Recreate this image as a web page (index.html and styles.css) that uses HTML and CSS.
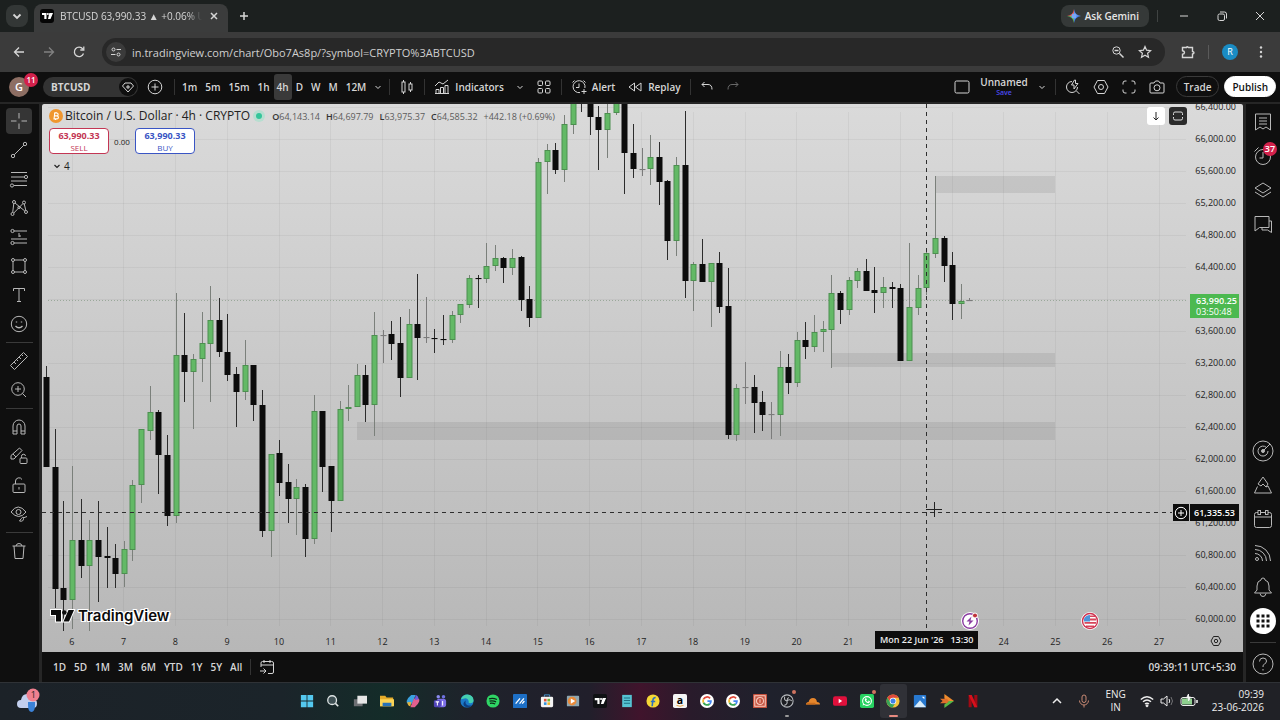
FILE: index.html
```html
<!DOCTYPE html>
<html lang="en">
<head>
    <meta charset="UTF-8">
    <meta name="viewport" content="width=device-width, initial-scale=1.0">
    <title>BTCUSD 63,990.33 ▲ +0.06% Unnamed</title>
    <link rel="stylesheet" href="styles.css">
</head>
<body>

<!-- browser window -->
<div class="tabstrip">
    <button class="tab-search" aria-label="Search tabs"><svg class="ic ic-12" viewBox="0 0 12 12"><path d="M2.5 4.5 6 8l3.5-3.5" stroke-width="1.8"/></svg></button>
    <div class="tab">
        <svg class="favicon" viewBox="0 0 14 14"><rect width="14" height="14" rx="3" fill="#050505"/><path d="M2 4h4.5v6H4.3V6H2zM9.3 4H13l-2.5 6H8z" fill="#fff"/><circle cx="7.9" cy="5" r="1" fill="#fff"/></svg>
        <span class="tab-title">BTCUSD 63,990.33 ▲ +0.06% Unnamed</span>
        <button class="plain" aria-label="Close tab"><svg class="ic ic-12" viewBox="0 0 12 12"><path d="M3 3l6 6M9 3 3 9" stroke-width="1.5"/></svg></button>
    </div>
    <button class="plain new-tab" aria-label="New tab"><svg class="ic ic-12" viewBox="0 0 12 12"><path d="M6 2v8M2 6h8" stroke-width="1.5"/></svg></button>
    <button class="gemini">
        <svg class="ic-14" viewBox="0 0 14 14"><path d="M7 0Q7.800 6.200 14 7L7 7z" fill="#5b8def"/><path d="M7 0Q6.200 6.200 0 7h7z" fill="#e35b55"/><path d="M0 7q6.200.8 7 7V7z" fill="#62b45c"/><path d="M14 7q-6.200.8-7 7V7z" fill="#4285f4"/><circle cx="7" cy="7" r="2.500" fill="#79a6f6"/></svg>
        Ask Gemini
    </button>
    <div class="window-buttons">
        <button class="plain" aria-label="Minimize"><svg class="ic ic-12" viewBox="0 0 12 12"><path d="M2 6h8"/></svg></button>
        <button class="plain" aria-label="Restore"><svg class="ic ic-12" viewBox="0 0 12 12"><rect x="2" y="4" width="6.5" height="6.5" rx="1.5"/><path d="M4 2h4.5q2 0 2 2v4.5"/></svg></button>
        <button class="plain" aria-label="Close"><svg class="ic ic-12" viewBox="0 0 12 12"><path d="M2 2l8 8M10 2l-8 8"/></svg></button>
    </div>
</div>

<div class="navbar">
    <button class="plain" aria-label="Back"><svg class="ic ic-14" viewBox="0 0 14 14"><path d="M12 7H2.500M7 2.500 2.500 7 7 11.500" stroke-width="1.300"/></svg></button>
    <button class="plain faded" aria-label="Forward"><svg class="ic ic-14" viewBox="0 0 14 14"><path d="M2 7h9.500M7 2.500 11.500 7 7 11.500" stroke-width="1.300"/></svg></button>
    <button class="plain" aria-label="Reload"><svg class="ic ic-14" viewBox="0 0 14 14"><path d="M11.500 8.500A4.700 4.700 0 1 1 10.800 4M11.800 1.500v3.500H8.300" stroke-width="1.300"/></svg></button>
    <div class="address">
        <span class="site-info"><svg class="ic ic-12" viewBox="0 0 12 12"><circle cx="3.500" cy="3.500" r="1.500"/><path d="M6.500 3.500H11M1 8.500h4.500"/><circle cx="8.500" cy="8.500" r="1.500"/></svg></span>
        <input class="url" type="text" aria-label="Address" value="in.tradingview.com/chart/Obo7As8p/?symbol=CRYPTO%3ABTCUSD">
        <button class="plain" aria-label="Zoom"><svg class="ic ic-14" viewBox="0 0 14 14"><circle cx="5.500" cy="5.500" r="3.700"/><path d="M8.500 8.500l4 4M3.500 5.500h4" stroke-width="1.500"/></svg></button>
        <button class="plain" aria-label="Bookmark"><svg class="ic ic-14" viewBox="0 0 14 14"><path d="M7 1.500l1.600 3.700 4 .4-3 2.700.9 4L7 10.200l-3.500 2.100.9-4-3-2.700 4-.4z" stroke-width="1.200"/></svg></button>
    </div>
    <button class="plain" aria-label="Extensions"><svg class="ic ic-14" viewBox="0 0 14 14"><path d="M1.500 2.500h4q.5-1.500 2 0h4v4q1.500.5 1.500 1.300T11.500 9v3.500h-10V9.300q2-.3 2-1.800t-2-1.800z" stroke-width="1.400"/></svg></button>
    <span class="nav-line"></span>
    <button class="profile">R</button>
    <button class="plain" aria-label="Menu"><svg class="ic-14" viewBox="0 0 14 14" fill="currentColor"><circle cx="7" cy="2.500" r="1.200"/><circle cx="7" cy="7" r="1.200"/><circle cx="7" cy="11.500" r="1.200"/></svg></button>
</div>

<!-- chart toolbar -->
<div class="toolbar">
    <button class="avatar">G<span class="badge">11</span></button>
    <button class="symbol">BTCUSD
        <span class="symbol-gem"><svg class="ic ic-16" viewBox="0 0 16 16"><path d="M5 4h6l2.500 3L8 13 2.500 7z"/><path d="M8 6v4M6 8h4"/></svg></span>
    </button>
    <button class="plain add-symbol" aria-label="Compare"><svg class="ic ic-16" viewBox="0 0 16 16"><circle cx="8" cy="8" r="6.800"/><path d="M8 4.500v7M4.500 8h7"/></svg></button>
    <span class="line"></span>
    <div class="intervals">
        <button>1m</button><button>5m</button><button>15m</button><button>1h</button><button class="active">4h</button><button>D</button><button>W</button><button>M</button><button>12M</button>
        <button aria-label="More intervals"><svg class="ic ic-8" viewBox="0 0 8 8"><path d="M1.500 3 4 5.500 6.500 3"/></svg></button>
    </div>
    <span class="line"></span>
    <button class="tool" aria-label="Chart type"><svg class="ic ic-16" viewBox="0 0 16 16"><path d="M4.500 1v2M4.500 13v2M11.500 3v2M11.500 11v2"/><rect x="3" y="3" width="3" height="10"/><rect x="10" y="5" width="3" height="6"/></svg></button>
    <span class="line"></span>
    <button class="tool"><svg class="ic ic-16" viewBox="0 0 16 16"><path d="M1 7l4-4 4 2 5-4"/><path d="M2 14.500v-4h3v4zM6.500 14.500v-6h3v6zM11 14.500v-8h3v8zM1 14.500h14"/></svg> Indicators</button>
    <button class="tool" aria-label="Indicator list"><svg class="ic ic-8" viewBox="0 0 8 8"><path d="M1.500 3 4 5.500 6.500 3"/></svg></button>
    <button class="tool" aria-label="Templates"><svg class="ic ic-16" viewBox="0 0 16 16"><rect x="2" y="2" width="4.500" height="4.500" rx="1"/><rect x="9.500" y="2" width="4.500" height="4.500" rx="1"/><rect x="2" y="9.500" width="4.500" height="4.500" rx="1"/><rect x="9.500" y="9.500" width="4.500" height="4.500" rx="1"/></svg></button>
    <span class="line"></span>
    <button class="tool"><svg class="ic ic-16" viewBox="0 0 16 16"><path d="M9 13.600A6 6 0 1 1 13.900 9M8 4.500V8.500H5M1.500 3.500l2-2M14.500 3.500l-2-2M13 10v5M10.500 12.500h5"/></svg> Alert</button>
    <button class="tool"><svg class="ic ic-16" viewBox="0 0 16 16"><path d="M7.500 4v8L2 8zM14 4v8L8.500 8z"/></svg> Replay</button>
    <span class="line"></span>
    <button class="tool" aria-label="Undo"><svg class="ic ic-14" viewBox="0 0 14 14"><path d="M4.500 2 2 4.500 4.500 7M2 4.500h6q4 0 4 5"/></svg></button>
    <button class="tool faded" aria-label="Redo"><svg class="ic ic-14" viewBox="0 0 14 14"><path d="M9.500 2 12 4.500 9.500 7M12 4.500H6q-4 0-4 5"/></svg></button>

    <div class="toolbar-right">
        <button class="tool" aria-label="Layout"><svg class="ic ic-16" viewBox="0 0 16 16"><rect x="1" y="2" width="14" height="12" rx="1.500"/></svg></button>
        <button class="layout-name">Unnamed<span>Save</span></button>
        <button class="tool" aria-label="Layouts"><svg class="ic ic-8" viewBox="0 0 8 8"><path d="M1.500 3 4 5.500 6.500 3"/></svg></button>
        <span class="line"></span>
        <button class="tool" aria-label="Quick search"><svg class="ic ic-16" viewBox="0 0 16 16"><path d="M7 2.500A5.500 5.500 0 1 0 12.500 8M11.500 12l3 3M9.500 1 6.500 6h2.500v4l4-5.500h-2.500V1z"/></svg></button>
        <button class="tool" aria-label="Settings"><svg class="ic ic-16" viewBox="0 0 16 16"><path d="M4.500 1.500h7L15 8l-3.500 6.500h-7L1 8z"/><circle cx="8" cy="8" r="2.500"/></svg></button>
        <button class="tool" aria-label="Fullscreen"><svg class="ic ic-16" viewBox="0 0 16 16"><path d="M2 5.500V4q0-2 2-2h1.500M10.500 2H12q2 0 2 2v1.500M14 10.500V12q0 2-2 2h-1.500M5.500 14H4q-2 0-2-2v-1.500"/></svg></button>
        <button class="tool" aria-label="Snapshot"><svg class="ic ic-16" viewBox="0 0 16 16"><path d="M2 4h3l1.500-2h3L11 4h3q1 0 1 1v8q0 1-1 1H2q-1 0-1-1V5q0-1 1-1z"/><circle cx="8" cy="8.800" r="3"/></svg></button>
        <button class="pill">Trade</button>
        <button class="pill pill-light">Publish</button>
    </div>
</div>

<div class="workspace">
    <div class="drawbar">
        <div class="draw-group">
            <button class="active" aria-label="Cross"><svg class="ic ic-20" viewBox="0 0 20 20"><path d="M10 2v5.500M10 12.500V18M2 10h5.500M12.500 10H18"/></svg></button>
            <button aria-label="Trend line"><svg class="ic ic-20" viewBox="0 0 20 20"><circle cx="4" cy="16" r="1.700"/><circle cx="16" cy="4" r="1.700"/><path d="M5.200 14.800 14.800 5.200"/></svg></button>
            <button aria-label="Fib retracement"><svg class="ic ic-20" viewBox="0 0 20 20"><path d="M2 3.500h16M2 8h13M2 12h16M5 16.500h13"/><circle cx="17" cy="8" r="1.600"/><circle cx="3" cy="16.500" r="1.600"/></svg></button>
            <button aria-label="Patterns"><svg class="ic ic-20" viewBox="0 0 20 20"><circle cx="5" cy="4" r="1.500"/><circle cx="15" cy="4.500" r="1.500"/><circle cx="3.500" cy="16" r="1.500"/><circle cx="17" cy="14" r="1.500"/><circle cx="10" cy="9.500" r="1.200"/><path d="M4.800 5.500 3.700 14.500M4.800 15 14 5.500M6 5l9.800 8M15.300 6l1.500 6.500"/></svg></button>
            <button aria-label="Prediction"><svg class="ic ic-20" viewBox="0 0 20 20"><circle cx="3.500" cy="4" r="1.600"/><circle cx="3.500" cy="16" r="1.600"/><path d="M5 4h13M5 16h13M2 12h16M10 6v4M10 9h2"/></svg></button>
            <button aria-label="Shapes"><svg class="ic ic-20" viewBox="0 0 20 20"><rect x="4" y="4" width="12" height="12"/><g fill="#0f0f0f"><circle cx="4" cy="4" r="1.500"/><circle cx="16" cy="4" r="1.500"/><circle cx="4" cy="16" r="1.500"/><circle cx="16" cy="16" r="1.500"/></g></svg></button>
            <button aria-label="Text"><svg class="ic ic-20" viewBox="0 0 20 20"><path d="M4.500 6V3.500h11V6M10 3.500v13M8 16.500h4"/></svg></button>
            <button aria-label="Emoji"><svg class="ic ic-20" viewBox="0 0 20 20"><circle cx="10" cy="10" r="7.700"/><path d="M6.500 12q3.500 3.500 7 0M7.500 7.500v1M12.500 7.500v1" stroke-width="1.400"/></svg></button>
        </div>
        <div class="draw-line"></div>
        <div class="draw-group">
            <button aria-label="Measure"><svg class="ic ic-20" viewBox="0 0 20 20"><path d="M1.500 14.500 14.500 1.500l4 4L5.500 18.500zM5 11l2 2M7.500 8.500l1.500 1.500M10 6l2 2M12.500 3.500 14 5"/></svg></button>
            <button aria-label="Zoom in"><svg class="ic ic-20" viewBox="0 0 20 20"><circle cx="9" cy="9" r="6.300"/><path d="M13.500 13.500 17 17M9 6v6M6 9h6"/></svg></button>
        </div>
        <div class="draw-line"></div>
        <div class="draw-group">
            <button aria-label="Magnet"><svg class="ic ic-20" viewBox="0 0 20 20"><path d="M4 17V9a6 6 0 0 1 12 0v8h-4V9a2 2 0 0 0-4 0v8zM4 14h4M12 14h4"/></svg></button>
            <button aria-label="Stay in drawing mode"><svg class="ic ic-20" viewBox="0 0 20 20"><path d="M2 13V9.500L10.500 2 13 4.500 5 13zM4 8l3 3"/><rect x="11" y="12" width="7" height="5.500" rx="1"/><path d="M12.500 12v-1.500a2 2 0 0 1 4-.5"/></svg></button>
            <button aria-label="Lock"><svg class="ic ic-20" viewBox="0 0 20 20"><rect x="4" y="9" width="12" height="8.500" rx="1"/><path d="M6.500 9V6a3.500 3.500 0 0 1 6.500-1.500M10 12v2.500" /></svg></button>
            <button aria-label="Hide drawings"><svg class="ic ic-20" viewBox="0 0 20 20"><path d="M2 8q7-10 15 0-7 9-15 0z"/><circle cx="9.500" cy="8" r="2.500"/><path d="M10.500 17q4-6 4-2.500t-4 2.500M14 14l4-1.500"/></svg></button>
        </div>
        <div class="draw-line"></div>
        <div class="draw-group">
            <button aria-label="Remove"><svg class="ic ic-20" viewBox="0 0 20 20"><path d="M3.500 5h13M7 5q.3-2.500 3-2.500T13 5M5 5l1 12.500h8L15 5"/></svg></button>
        </div>
    </div>

    <div class="center">
        <div class="chart">
            <svg class="plot" id="plot" aria-label="BTCUSD 4h candles"></svg>

            <div class="legend">
                <div class="legend-title">
                    <svg class="ic-14" viewBox="0 0 14 14"><circle cx="7" cy="7" r="7" fill="#f0962e"/><path d="M5 4h2.700a1.400 1.400 0 0 1 0 2.900H5.300h2.600a1.500 1.500 0 0 1 0 3H4.500M5.800 4 5 10M7 3v1M6.500 10v1" fill="none" stroke="#fff" stroke-width="1.100"/></svg>
                    <h1>Bitcoin / U.S. Dollar · 4h · CRYPTO</h1>
                    <span class="status"></span>
                    <span class="ohlc"><b>O</b>64,143.14</span>
                    <span class="ohlc"><b>H</b>64,697.79</span>
                    <span class="ohlc"><b>L</b>63,975.37</span>
                    <span class="ohlc"><b>C</b>64,585.32</span>
                    <span class="ohlc">+442.18 (+0.69%)</span>
                </div>
                <div class="orders">
                    <button class="order sell">63,990.33<span>SELL</span></button>
                    <span class="spread">0.00</span>
                    <button class="order buy">63,990.33<span>BUY</span></button>
                </div>
                <button class="collapse"><svg class="ic ic-8" viewBox="0 0 8 8"><path d="M1.500 3 4 5.500 6.500 3" stroke-width="1.200"/></svg> 4</button>
            </div>

            <div class="pane-buttons">
                <button aria-label="Move pane down"><svg class="ic ic-12" viewBox="0 0 12 12"><path d="M6 2v8M3.500 7.500 6 10l2.500-2.500"/></svg></button>
                <button class="dark" aria-label="Maximize pane"><svg class="ic ic-12" viewBox="0 0 12 12"><path d="M1.500 5V3.500q0-1.500 1.500-1.500h6q1.500 0 1.500 1.500V5M1.500 7v1.500Q1.500 10 3 10h6q1.500 0 1.500-1.500V7"/></svg></button>
            </div>

            <div class="price-axis">
                <span>66,400.00</span><span>66,000.00</span><span>65,600.00</span><span>65,200.00</span><span>64,800.00</span><span>64,400.00</span><span></span><span>63,600.00</span><span>63,200.00</span><span>62,800.00</span><span>62,400.00</span><span>62,000.00</span><span>61,600.00</span><span>61,200.00</span><span>60,800.00</span><span>60,400.00</span><span>60,000.00</span>
            </div>
            <div class="time-axis">
                <span>6</span><span>7</span><span>8</span><span>9</span><span>10</span><span>11</span><span>12</span><span>13</span><span>14</span><span>15</span><span>16</span><span>17</span><span>18</span><span>19</span><span>20</span><span>21</span><span></span><span></span><span>24</span><span>25</span><span>26</span><span>27</span>
                <button class="plain" aria-label="Axis settings"><svg class="ic ic-12" viewBox="0 0 12 12"><path d="M3.500 1.500h5L11 6l-2.500 4.500h-5L1 6z"/><circle cx="6" cy="6" r="1.700"/></svg></button>
            </div>

            <div class="last-price"><b>63,990.25</b>03:50:48</div>
            <div class="cross-price">
                <button aria-label="Add alert at price"><svg class="ic ic-14" viewBox="0 0 14 14"><circle cx="7" cy="7" r="5.700"/><path d="M7 4v6M4 7h6"/></svg></button>
                <span>61,335.53</span>
            </div>
            <div class="cross-time">Mon 22 Jun '26 &nbsp; 13:30</div>

            <svg class="event event-flash" viewBox="0 0 18 18"><circle cx="9" cy="9" r="9" fill="#fff"/><circle cx="9" cy="9" r="7.300" fill="#fff" stroke="#8a3ba0" stroke-width="1.400"/><path d="M10.500 4.500 5.500 9.500h3l-1 4 5-5h-3z" fill="#8a3ba0"/><circle cx="14" cy="3.500" r="2.500" fill="#c0343c" stroke="#fff"/></svg>
            <svg class="event event-flag" viewBox="0 0 18 18"><circle cx="9" cy="9" r="9" fill="#fff"/><path d="M9 3.500h5v1.500H9zM9 6.500h6v2H9zM3.500 10h11.500v1.800H3.500zM5 13.500h8V15H5z" fill="#d6455a"/><path d="M3 9.500V6.500Q5 3 9 3v6.500z" fill="#4f93d8"/><circle cx="9" cy="9" r="7.500" fill="none" stroke="#cf3350" stroke-width="1.400"/></svg>

            <div class="tv-logo">
                <svg viewBox="0 0 24 16"><path d="M1 2h10v11.500H6V7H1zM18.500 2H24l-5 11.500h-5.500z" fill="#0b0b0b" stroke="#fff" stroke-width="2" paint-order="stroke"/><circle cx="14.300" cy="4.500" r="2.300" fill="#0b0b0b"/></svg>
                TradingView
            </div>
        </div>

        <div class="rangebar">
            <button>1D</button><button>5D</button><button>1M</button><button>3M</button><button>6M</button><button>YTD</button><button>1Y</button><button>5Y</button><button>All</button>
            <span class="line"></span>
            <button class="goto" aria-label="Go to date"><svg class="ic ic-16" viewBox="0 0 16 16"><path d="M2 8V4q0-1.500 1.500-1.500h9Q14.500 2.500 14.500 4v9q0 1.500-1.500 1.500H9M2 6h12.500M5 1v3M11 1v3M1 12h6M4.500 9.500 7 12l-2.500 2.500"/></svg></button>
            <button class="clock">09:39:11 UTC+5:30</button>
        </div>
    </div>

    <div class="widgetbar">
        <div>
            <button aria-label="Watchlist"><svg class="ic ic-20" viewBox="0 0 20 20"><path d="M2.500 2h15v16L13 15l-3 2-3-2-4.500 3zM6 6h8M6 9h8M6 12h8"/></svg></button>
            <button aria-label="Alerts"><svg class="ic ic-20" viewBox="0 0 20 20"><circle cx="10" cy="11" r="7.500"/><path d="M10 6v6H6.500M1.500 5.500l4-4"/></svg><span class="badge">37</span></button>
            <button aria-label="Object tree"><svg class="ic ic-20" viewBox="0 0 20 20"><path d="M10 3l8 5-8 5-8-5zM2 12l8 5 8-5"/></svg></button>
            <button aria-label="Chats"><svg class="ic ic-20" viewBox="0 0 20 20"><path d="M2 2.500h14v11H6.500L2 17zM16 7h2.500v11.500L14.500 16H9v-2.500"/></svg></button>
        </div>
        <div>
            <button aria-label="Screeners"><svg class="ic ic-22" viewBox="0 0 22 22"><circle cx="11" cy="11" r="10"/><path d="M14.500 7.500A5 5 0 1 0 16 11M11 11l7-7"/><circle cx="11" cy="11" r="1.500" fill="currentColor"/></svg></button>
            <button aria-label="Pine"><svg class="ic ic-20" viewBox="0 0 20 20"><path d="M10 2 5 9l3 2 2-2 3 3 2-3zM4.500 11.500 1.500 18h17l-3.500-7-2 1"/></svg></button>
            <button aria-label="Calendar"><svg class="ic ic-20" viewBox="0 0 20 20"><rect x="1.500" y="3.500" width="17" height="15" rx="2"/><path d="M1.500 8h17"/><rect x="5" y="1.500" width="2.500" height="4" fill="#0f0f0f"/><rect x="12.500" y="1.500" width="2.500" height="4" fill="#0f0f0f"/></svg></button>
            <button aria-label="News"><svg class="ic ic-20" viewBox="0 0 20 20"><circle cx="4" cy="16" r="1.500"/><path d="M2 10.500A7.500 7.500 0 0 1 9.500 18M2 6.500A11.500 11.500 0 0 1 13.500 18M2 2.500A15.500 15.500 0 0 1 17.500 18"/></svg></button>
            <button aria-label="Notifications"><svg class="ic ic-20" viewBox="0 0 20 20"><path d="M1.500 16 4 13V9q0-5 4-6 0-2 2-2t2 2q4 1 4 6v4l2.500 3zM7 16.500q.5 3 3 3t3-3"/></svg></button>
            <button aria-label="Products"><svg class="ic-26" viewBox="0 0 26 26"><circle cx="13" cy="13" r="13" fill="#fff"/><path d="M6.500 6.500h3v3h-3zM11.500 6.500h3v3h-3zM16.500 6.500h3v3h-3zM6.500 11.500h3v3h-3zM11.500 11.500h3v3h-3zM16.500 11.500h3v3h-3zM6.500 16.500h3v3h-3zM11.500 16.500h3v3h-3zM16.500 16.500h3v3h-3z" fill="#111"/></svg></button>
            <div class="widget-line"></div>
            <button aria-label="Help"><svg class="ic ic-22" viewBox="0 0 22 22"><circle cx="11" cy="11" r="10"/><path d="M7.500 8.500q0-3.500 3.500-3.500t3.500 3q0 2-2 3T11 14M11 16v1.500"/></svg></button>
        </div>
    </div>
</div>

<!-- taskbar -->
<div class="taskbar">
    <button class="weather" aria-label="Weather"><svg viewBox="0 0 24 26"><path d="M5 20a4 4 0 0 1 0-8q1-6 6-6t6 5q4 0 4 4.500T17 20z" fill="#c3cfee"/><path d="M12 14h7v3q0 7-3.500 7T12 17z" fill="#3b82d8"/><circle cx="17" cy="7" r="6.500" fill="#f0808f"/></svg><span>1</span></button>
    <div class="apps">
        <button aria-label="Start"><svg viewBox="0 0 16 16" fill="#54c8ef"><path d="M1 1h6.500v6.500H1zM8.500 1H15v6.500H8.500zM1 8.500h6.500V15H1zM8.500 8.500H15V15H8.500z"/></svg></button>
        <button aria-label="Search"><svg class="ic" viewBox="0 0 16 16"><circle cx="7" cy="7" r="5" fill="#3f5054" stroke="#dfe5e5" stroke-width="1.500"/><path d="M10.700 10.700 14 14" stroke="#dfe5e5" stroke-width="1.800"/></svg></button>
        <button aria-label="Task view"><svg viewBox="0 0 16 16"><rect x="1" y="6" width="10" height="8" fill="#6d6f73"/><rect x="5" y="2" width="11" height="9" fill="#e6e6e6"/></svg></button>
        <button aria-label="File Explorer"><svg viewBox="0 0 16 16"><path d="M0 2h6l1.500 2H15v10H0z" fill="#e5ac2a"/><path d="M0 6h16v8H0z" fill="#fbd456"/><path d="M3 10h10v4H3z" fill="#2772b8"/></svg></button>
        <button aria-label="Copilot"><svg viewBox="0 0 16 16"><path d="M6 1h5L7 11H3Q0 11 1 7.500T6 1z" fill="#3aa2e0"/><path d="M10 15H5L9 5h4q3 0 2 3.500T10 15z" fill="#e2608e"/><path d="M1.500 9.500 6 9l-1 5q-3 0-3.500-4.500z" fill="#e3b43c"/><path d="M11 1q3 .5 3.500 5L10 7z" fill="#735ad8"/></svg></button>
        <button aria-label="Teams"><svg viewBox="0 0 16 16"><circle cx="6" cy="3" r="2" fill="#8b8cf0"/><circle cx="12" cy="3" r="2" fill="#7073e0"/><rect x="4" y="5.500" width="11" height="9.500" rx="3" fill="#7c6ee6"/><rect x="1" y="7" width="8" height="8" rx="1.500" fill="#5144b8"/><path d="M3 9h4M5 9v4M11 8v5" stroke="#fff" stroke-width="1.200"/></svg></button>
        <button aria-label="Edge"><svg viewBox="0 0 16 16"><circle cx="8" cy="8" r="7.500" fill="#1b79c8"/><path d="M1 6Q3 .5 8.500.5 15 1 15.500 7q0 3.500-4 3.500-2.500-.3-1.500-2Q9 4.500 5 5 2 5.500 1 6z" fill="#46cfae"/><path d="M7 7q-2 3 1 5.500 3 1.500 6 0-4 4.500-9 1.500-3-4 2-7z" fill="#0c3f82"/></svg></button>
        <button aria-label="Spotify"><svg viewBox="0 0 16 16"><circle cx="8" cy="8" r="7.500" fill="#2fd565"/><path d="M3.500 5.500q4.500-1.500 9 .8M4 8.200q4-1 7.500.8M4.500 10.800q3-.8 6 .7" fill="none" stroke="#0d2a18" stroke-width="1.400"/></svg></button>
        <button aria-label="Trading app"><svg viewBox="0 0 16 16"><rect width="16" height="16" rx="1" fill="#1d6fc6"/><path d="M3 11 8 5M7.500 11l5-6M10.500 11 13 8" stroke="#fff" stroke-width="1.500"/></svg></button>
        <button aria-label="Store"><svg viewBox="0 0 16 16"><path d="M5 3V1h6v2" fill="none" stroke="#4aa3e0"/><rect x="1" y="3" width="14" height="12" rx="1.500" fill="#f4f4f4"/><path d="M4.500 5.500h3v3h-3z" fill="#e0533a"/><path d="M8.500 5.500h3v3h-3z" fill="#6fb53a"/><path d="M4.500 9.500h3v3h-3z" fill="#3494dc"/><path d="M8.500 9.500h3v3h-3z" fill="#efb52c"/></svg></button>
        <button aria-label="Media player"><svg viewBox="0 0 16 16"><rect x="1" y="2" width="14" height="12" rx="1" fill="#8fa6b0"/><circle cx="7" cy="8" r="5" fill="#e98a3a"/><path d="M5.500 5v6l5-3z" fill="#fff"/></svg></button>
        <button aria-label="TradingView"><svg viewBox="0 0 16 16"><rect width="16" height="16" rx="2" fill="#101114"/><path d="M2 4.500h5.500v7H5V7H2zM11 4.500h4l-3 7H9z" fill="#fff"/><circle cx="9.200" cy="5.700" r="1.200" fill="#fff"/></svg></button>
        <button aria-label="Notepad"><svg viewBox="0 0 16 16"><path d="M2.500 1h11v14h-11z" fill="#56c3d3"/><path d="M4.500 4.500h7M4.500 7.500h7M4.500 10.500h7" stroke="#1f6f84" stroke-width="1.200"/></svg></button>
        <button aria-label="Flipkart"><svg viewBox="0 0 16 16"><circle cx="8" cy="8" r="7.500" fill="#f6d736"/><path d="M7 14l1-7.500Q8.500 4 11 4M5.500 8.500h5" fill="none" stroke="#2a6fc0" stroke-width="1.800"/></svg></button>
        <button aria-label="Amazon"><svg viewBox="0 0 16 16"><rect width="16" height="16" rx="2" fill="#f4f4f4"/><text x="8" y="11" class="amazon-a">a</text><path d="M4 13q4 2 8 0" fill="none" stroke="#e69a2e"/></svg></button>
        <button aria-label="Google"><svg viewBox="0 0 16 16" fill="none" stroke-width="2"><circle cx="8" cy="8" r="8" fill="#fff"/><path d="M11.500 5A4.500 4.500 0 0 0 4 6" stroke="#e14a3b"/><path d="M4 6a4.500 4.500 0 0 0 0 4" stroke="#f2b92c"/><path d="M4 10a4.500 4.500 0 0 0 7 1.400" stroke="#3aa757"/><path d="M11 11.400q1.500-1.200 1.500-3.400H8.500" stroke="#4285f4"/></svg></button>
        <button aria-label="Google profile"><svg viewBox="0 0 16 16" fill="none" stroke-width="2"><circle cx="8" cy="8" r="8" fill="#fff"/><path d="M11.500 5A4.500 4.500 0 0 0 4 6" stroke="#e14a3b"/><path d="M4 6a4.500 4.500 0 0 0 0 4" stroke="#f2b92c"/><path d="M4 10a4.500 4.500 0 0 0 7 1.400" stroke="#3aa757"/><path d="M11 11.400q1.500-1.200 1.500-3.400H8.500" stroke="#4285f4"/></svg></button>
        <button aria-label="Broker"><svg viewBox="0 0 16 16" fill="none" stroke="#f6c9bd" stroke-width="1.200"><rect width="16" height="16" rx="1" fill="#c4513d" stroke="none"/><rect x="2" y="2" width="12" height="12"/><circle cx="8" cy="8" r="4"/><path d="M8 6v4"/></svg></button>
        <button aria-label="OBS" class="running"><svg viewBox="0 0 16 16" fill="none" stroke="#b9bcc0" stroke-width="1.200"><circle cx="8" cy="8" r="7" fill="#1c1d22"/><path d="M8 8Q4 7 5.500 3M8 8q1 4-3 5M8 8q3-3 5.500 0M8 8Q8 5 10 4"/></svg><i class="dot"></i></button>
        <button aria-label="Cloudflare"><svg viewBox="0 0 16 16"><path d="M0 12q0-3 3-3 1-4.500 5-4.500T12.500 9Q16 9 16 12z" fill="#e6862c"/><path d="M0 12q0-2 2-2h8q1.500 0 .5 2z" fill="#c96d1c"/></svg></button>
        <button aria-label="YouTube"><svg viewBox="0 0 16 16"><rect y="2.500" width="16" height="11" rx="2.500" fill="#e0103c"/><path d="M6.500 5.500v5l4-2.500z" fill="#fff"/></svg></button>
        <button aria-label="WhatsApp"><svg viewBox="0 0 16 16"><rect width="16" height="16" rx="2" fill="#27d261"/><circle cx="8" cy="8" r="5" fill="none" stroke="#fff" stroke-width="1.200"/><path d="M6 6q0 3 4 4l.7-1.300-1.500-.7M6 6l.7-.5.8 1.500" fill="none" stroke="#fff" stroke-width="1.200"/><path d="m3 13 .7-2.500 1.800 1.800z" fill="#fff"/></svg><i class="dot"></i></button>
        <button aria-label="Chrome" class="current"><svg viewBox="0 0 16 16"><circle cx="8" cy="8" r="7.500" fill="#f5c33b"/><path d="M1.500 4.300A7.500 7.500 0 0 1 14.500 4.300H8L5 9.500z" fill="#df4a3c"/><path d="M1.500 4.300A7.500 7.500 0 0 0 7.500 15.500L10.800 10 5 9.500z" fill="#38a456"/><circle cx="8" cy="8" r="3.700" fill="#fff"/><circle cx="8" cy="8" r="2.900" fill="#3f80e8"/></svg></button>
        <button aria-label="Photos"><svg viewBox="0 0 16 16"><rect x="1" y="1" width="14" height="14" rx="1" fill="#2778cf"/><path d="M1 15 8 7l7 8z" fill="#d7ecfa"/><path d="M10 3h3v3z" fill="#fff"/></svg></button>
        <button aria-label="Player"><svg viewBox="0 0 16 16"><path d="M5 0 16 8l-6 1-5-4z" fill="#ee8b2d"/><path d="M16 8 5 16v-4l5-4z" fill="#58b947"/><path d="M0 5.500h8L10 8l-2 2.500H0L3 8z" fill="#e0702c"/></svg></button>
        <button aria-label="Netflix"><svg viewBox="0 0 16 16"><path d="M3 1h3.500v14H3zM9.500 1H13v14H9.500z" fill="#a00a14"/><path d="M3 1h3.500L13 15H9.500z" fill="#d8101c"/></svg></button>
    </div>
    <div class="tray">
        <button aria-label="Hidden icons"><svg class="ic ic-12" viewBox="0 0 12 12"><path d="M2 8l4-4 4 4" stroke-width="1.500"/></svg></button>
        <button class="mic" aria-label="Microphone"><svg class="ic ic-14" viewBox="0 0 14 14"><rect x="5" y="1" width="4" height="7.500" rx="2"/><path d="M2.500 6.500a4.500 4.500 0 0 0 9 0M7 11v2.500"/></svg></button>
        <div class="lang"><span>ENG</span><span>IN</span></div>
        <div class="system">
            <svg class="ic ic-14" viewBox="0 0 14 14"><path d="M.8 5.500q6.200-5.500 12.400 0M3 7.800q4-3.500 8 0M5 10q2-1.700 4 0" stroke-width="1.400"/><circle cx="7" cy="11.800" r="1" fill="currentColor"/></svg>
            <svg class="ic ic-14" viewBox="0 0 14 14"><path d="M1 5h2.500L7 2v10L3.500 9H1z"/><path d="M9 5q1.500 2 0 4"/><path d="M11 3q3 4 0 8" opacity=".4"/></svg>
            <svg class="ic battery" viewBox="0 0 18 14"><rect x="1" y="3.500" width="14" height="8" rx="2"/><rect x="2" y="4.500" width="10" height="6" fill="#8fd08f" stroke="none"/><path d="M17 6v3" stroke-width="1.600"/><path d="M8.500 0 6.500 4h2v3l2-4h-2z" fill="#fff"/></svg>
        </div>
        <div class="datetime"><span>09:39</span><span>23-06-2026</span></div>
    </div>
</div>

<script src="chart.js"></script>
</body>
</html>
```

FILE: styles.css
```css
* {
    box-sizing: border-box;
}
body {
    margin: 0;
    height: 100vh;
    display: flex;
    flex-direction: column;
    overflow: hidden;
    background: #0f0f0f;
    color: #d6d6d6;
    font-family: "Open Sans", "Noto Sans", sans-serif;
    font-size: 11px;
}
button {
    padding: 0;
    border: 0;
    background: none;
    color: inherit;
    font: inherit;
    cursor: pointer;
}
svg {
    display: block;
    flex: none;
}
.ic {
    fill: none;
    stroke: currentColor;
    stroke-width: 1;
}
.ic-8 { width: 8px; height: 8px; }
.ic-12 { width: 12px; height: 12px; }
.ic-14 { width: 14px; height: 14px; }
.ic-16 { width: 16px; height: 16px; }
.ic-20 { width: 20px; height: 20px; }
.ic-22 { width: 22px; height: 22px; }
.ic-26 { width: 26px; height: 26px; }
.plain {
    display: flex;
    align-items: center;
    justify-content: center;
}
.faded {
    opacity: 0.45;
}
.badge {
    position: absolute;
    top: -4px;
    right: -9px;
    min-width: 14px;
    height: 14px;
    border-radius: 7px;
    background: #d3214b;
    color: #fff;
    font-size: 8px;
    line-height: 14px;
    text-align: center;
}

/* browser */
.tabstrip {
    display: flex;
    flex: none;
    align-items: center;
    height: 32px;
    padding: 0 8px 0 6px;
    background: #1c201f;
}
.tab-search {
    display: flex;
    align-items: center;
    justify-content: center;
    width: 22px;
    height: 22px;
    border-radius: 8px;
    background: #333736;
}
.tab {
    display: flex;
    align-items: center;
    align-self: flex-end;
    gap: 6px;
    width: 194px;
    height: 28px;
    margin-left: 6px;
    padding: 0 8px 4px 6px;
    border-radius: 8px 8px 0 0;
    background: #3b3c3c;
}
.favicon {
    width: 14px;
    height: 14px;
}
.tab-title {
    flex: 1;
    overflow: hidden;
    white-space: nowrap;
    font-size: 10px;
    -webkit-mask-image: linear-gradient(90deg, #000 90%, transparent);
    mask-image: linear-gradient(90deg, #000 90%, transparent);
}
.new-tab {
    margin-left: 10px;
}
.gemini {
    display: flex;
    align-items: center;
    gap: 4px;
    height: 22px;
    margin-left: auto;
    padding: 0 10px 0 6px;
    border-radius: 8px;
    background: #353938;
    color: #e6e6e6;
    font-size: 10px;
    font-weight: 600;
}
.window-buttons {
    display: flex;
    gap: 26px;
    margin-left: 8px;
    padding: 0 6px 0 20px;
    border-left: 1px solid #3f4342;
}
.navbar {
    display: flex;
    flex: none;
    align-items: center;
    gap: 16px;
    height: 40px;
    padding: 0 12px;
    background: #3b3b3b;
}
.address {
    display: flex;
    flex: 1;
    align-items: center;
    gap: 13px;
    height: 28px;
    padding: 0 13px 0 4px;
    border-radius: 14px;
    background: #282828;
}
.site-info {
    display: flex;
    align-items: center;
    justify-content: center;
    width: 20px;
    height: 20px;
    border-radius: 10px;
    background: #3b3b3b;
}
.url {
    flex: 1;
    margin-left: -7px;
    padding: 0;
    border: 0;
    outline: 0;
    background: none;
    color: #d0d0d0;
    font: inherit;
}
.nav-line {
    width: 1px;
    height: 14px;
    margin: 0 -3px;
    background: #5a5a5a;
}
.profile {
    width: 16px;
    height: 16px;
    border-radius: 8px;
    background: #1a8cc4;
    color: #fff;
    font-size: 9px;
    line-height: 16px;
}

/* chart toolbar */
.toolbar {
    display: flex;
    flex: none;
    align-items: center;
    height: 32px;
    padding: 0 4px 1px 9px;
    border-bottom: 2px solid #262626;
    font-size: 10px;
    font-weight: 600;
}
.line {
    width: 1px;
    height: 16px;
    background: #333;
}
.toolbar .line {
    margin: 0 3px;
}
.avatar {
    position: relative;
    width: 20px;
    height: 20px;
    margin-right: 14px;
    border-radius: 10px;
    background: #8d6e63;
    color: #fff;
    font-size: 11px;
    line-height: 20px;
}
.symbol {
    display: flex;
    align-items: center;
    justify-content: space-between;
    width: 95px;
    height: 20px;
    padding: 0 1px 0 8px;
    border-radius: 10px;
    background: #333;
    font-weight: 700;
}
.symbol-gem {
    display: flex;
    padding: 1px;
    border-radius: 9px;
    background: #0f0f0f;
}
.add-symbol {
    margin: 0 8px 0 9px;
}
.intervals {
    display: flex;
}
.intervals button {
    display: flex;
    align-items: center;
    height: 26px;
    padding: 0 4px;
    border-radius: 3px;
}
.intervals .active {
    padding: 0 3px;
    background: #3a3a3a;
}
.tool {
    display: flex;
    align-items: center;
    gap: 5px;
    height: 26px;
    padding: 0 6px;
}
.toolbar-right {
    display: flex;
    align-items: center;
    margin-left: auto;
}
.layout-name {
    padding: 0 4px;
    line-height: 12px;
    text-align: center;
}
.layout-name span {
    display: block;
    color: #4a4af0;
    font-size: 7px;
    line-height: 9px;
}
.pill {
    height: 21px;
    margin-left: 5px;
    padding: 0 7px;
    border: 1px solid #3a3a3a;
    border-radius: 11px;
}
.pill-light {
    border-color: #fff;
    background: #fff;
    color: #111;
}

/* workspace */
.workspace {
    display: flex;
    flex: 1;
    min-height: 0;
}
.drawbar {
    flex: none;
    width: 42px;
    padding: 4px 0 0 6px;
    border-right: 3px solid #262626;
}
.draw-group {
    display: flex;
    flex-direction: column;
    gap: 3px;
    width: 26px;
}
.draw-group button {
    display: flex;
    align-items: center;
    justify-content: center;
    height: 26px;
    border-radius: 4px;
    color: #b8b8b8;
}
.draw-group .active {
    background: #353535;
}
.draw-line {
    width: 27px;
    height: 1px;
    margin: 5px 0;
    background: #3a3a3a;
}
.center {
    display: flex;
    flex: 1;
    flex-direction: column;
    min-width: 0;
}
.chart {
    position: relative;
    flex: 1;
    overflow: hidden;
    border-radius: 2px 2px 0 0;
    background: linear-gradient(#dadada, #b7b7b7);
    color: #222;
}
.plot {
    position: absolute;
    width: 100%;
    height: 100%;
}
.grid { stroke: rgba(0, 0, 0, 0.045); }
.zone { fill: rgba(100, 100, 100, 0.15); }
.up .wick { stroke: #7b807b; }
.down .wick { stroke: #2c2c2c; }
.up .body { fill: #63b966; stroke: #4d8f50; }
.down .body { fill: #0c0c0c; stroke: #0c0c0c; }
.flat .wick, .flat .body { stroke: #7b7b7b; }
.cross { stroke: #2e2e2e; stroke-dasharray: 4 4; }
.last { stroke: #9aa89a; stroke-dasharray: 1 2; }
.cursor { stroke: #222; }

.legend {
    position: absolute;
    top: 4px;
    left: 7px;
}
.legend-title {
    display: flex;
    align-items: center;
    gap: 6px;
    height: 16px;
}
.legend h1 {
    margin: 0 0 0 -4px;
    font-size: 12px;
    font-weight: 500;
    line-height: 16px;
}
.status {
    width: 6px;
    height: 6px;
    margin-right: 4px;
    border-radius: 3px;
    background: #35c59a;
    box-shadow: 0 0 0 3px #b7ded0;
}
.ohlc {
    color: #5c5c5c;
    font-size: 9px;
}
.ohlc b {
    color: #333;
    font-weight: 600;
}
.orders {
    display: flex;
    align-items: center;
    gap: 5px;
    margin-top: 4px;
}
.order {
    width: 60px;
    height: 26px;
    border: 1px solid;
    border-radius: 4px;
    background: #fff;
    font-size: 9px;
    font-weight: 700;
    line-height: 12px;
}
.order span {
    display: block;
    font-size: 8px;
    font-weight: 400;
    line-height: 11px;
}
.sell { color: #c33654; }
.buy { color: #3a55c4; }
.spread {
    display: flex;
    justify-content: center;
    width: 16px;
    font-size: 8px;
}
.collapse {
    display: flex;
    align-items: center;
    gap: 3px;
    margin: 5px 0 0 4px;
    font-size: 10px;
}
.pane-buttons {
    position: absolute;
    top: 3px;
    right: 56px;
    display: flex;
    gap: 4px;
}
.pane-buttons button {
    display: flex;
    align-items: center;
    justify-content: center;
    width: 18px;
    height: 18px;
    border-radius: 3px;
    background: #fff;
}
.pane-buttons .dark {
    background: #2b2b2b;
    color: #ddd;
}
.price-axis {
    position: absolute;
    top: -13px;
    right: 7px;
    display: flex;
    flex-direction: column;
    text-align: right;
    font-size: 9px;
    font-weight: 500;
    line-height: 32px;
}
.price-axis span {
    height: 32px;
}
.time-axis {
    position: absolute;
    right: 0;
    bottom: 0;
    left: 0;
    display: flex;
    align-items: center;
    height: 22px;
    padding-left: 4px;
    font-size: 9px;
    font-weight: 500;
}
.time-axis span {
    flex: 1 1 0;
    text-align: center;
}
.time-axis button {
    width: 58px;
    padding-left: 5px;
}
.last-price {
    position: absolute;
    top: 190px;
    right: 4px;
    width: 49px;
    padding: 1px 0 1px 6px;
    background: #4cb950;
    color: #fff;
    font-size: 9px;
    line-height: 11px;
}
.last-price b {
    display: block;
    font-weight: 600;
}
.cross-price {
    position: absolute;
    top: 400px;
    right: 4px;
    display: flex;
    gap: 1px;
    color: #fff;
    font-size: 9px;
    font-weight: 600;
}
.cross-price button,
.cross-price span {
    padding: 1px;
    background: #0d0d0d;
}
.cross-price span {
    width: 49px;
    text-align: center;
    line-height: 15px;
}
.cross-time {
    position: absolute;
    bottom: 3px;
    left: 833px;
    padding: 0 5px;
    background: #0d0d0d;
    color: #eee;
    font-size: 9px;
    font-weight: 600;
    line-height: 18px;
}
.event {
    position: absolute;
    bottom: 22px;
    width: 18px;
    height: 18px;
}
.event-flash { left: 919px; }
.event-flag { left: 1039px; }
.tv-logo {
    position: absolute;
    bottom: 27px;
    left: 8px;
    display: flex;
    align-items: center;
    gap: 4px;
    color: #0b0b0b;
    font-family: "Inter", sans-serif;
    font-size: 15px;
    font-weight: 600;
    text-shadow: 1px 0 #fff, -1px 0 #fff, 0 1px #fff, 0 -1px #fff, 2px 1px #fff, -1px -1px #fff, 1px -1px #fff, -1px 1px #fff;
}
.tv-logo svg {
    width: 24px;
    height: 16px;
    overflow: visible;
}

.rangebar {
    display: flex;
    flex: none;
    align-items: center;
    gap: 8px;
    height: 30px;
    padding: 0 7px 0 11px;
    font-size: 10px;
    font-weight: 600;
}
.clock {
    margin-left: auto;
}

.widgetbar {
    display: flex;
    flex: none;
    flex-direction: column;
    justify-content: space-between;
    width: 37px;
    padding: 1px 0;
    border-left: 3px solid #262626;
}
.widgetbar button {
    position: relative;
    display: flex;
    align-items: center;
    justify-content: center;
    width: 100%;
    height: 34px;
    color: #b8b8b8;
}
.widgetbar .badge {
    top: 3px;
    right: 3px;
    font-size: 9px;
    font-weight: 600;
}
.widget-line {
    height: 1px;
    margin: 4px;
    background: #3a3a3a;
}

/* taskbar */
.taskbar {
    display: grid;
    flex: none;
    grid-template-columns: 1fr auto 1fr;
    align-items: center;
    height: 38px;
    padding-bottom: 2px;
    border-top: 1px solid #2f3236;
    background: linear-gradient(90deg, #1c2228 0%, #1b242a 22%, #142c29 30%, #1f222b 37%, #211f2b 46%, #40142c 50%, #291b2b 54%, #1f212c 60%, #202126 70%, #202126 100%);
}
.weather {
    position: relative;
    width: 24px;
    margin-left: 16px;
}
.weather span {
    position: absolute;
    top: 0;
    right: 4px;
    color: #222;
    font-size: 9px;
}
.apps {
    display: flex;
    width: 693px;
}
.apps button {
    position: relative;
    display: flex;
    flex: 1 1 0;
    align-items: center;
    justify-content: center;
    height: 34px;
}
.apps svg {
    width: 14px;
    height: 14px;
}
.amazon-a {
    font: bold 12px "Open Sans", sans-serif;
    text-anchor: middle;
}
.dot {
    position: absolute;
    top: 6px;
    right: 4px;
    width: 4px;
    height: 4px;
    border-radius: 2px;
    background: #cf7360;
}
.running::after,
.current::after {
    content: "";
    position: absolute;
    bottom: 1px;
    width: 4px;
    height: 2px;
    border-radius: 1px;
    background: #9a9a9a;
}
.current {
    border-radius: 3px;
    background: #303137;
}
.current::after {
    width: 9px;
    background: #e88a80;
}
.tray {
    display: flex;
    align-items: center;
    justify-content: flex-end;
    gap: 14px;
    padding-right: 16px;
    color: #eee;
    font-size: 10px;
    line-height: 13px;
}
.mic {
    color: #c98a74;
}
.lang,
.datetime {
    display: flex;
    flex-direction: column;
    align-items: center;
}
.datetime {
    align-items: flex-end;
}
.system {
    display: flex;
    gap: 6px;
}
.battery {
    width: 18px;
    height: 14px;
}
```

FILE: chart.js
```javascript
// candle: [direction, high, body top, body bottom, low], direction is u(p), d(own) or f(lat)
const candles = [
    ["d",262,273,363,363],["d",325,363,485,504],["d",397,484,496,527],["u",362,436,496,525],
    ["d",395,436,462,474],["u",416,436,462,527],["d",397,436,453,498],["d",423,452,454,484],
    ["d",440,454,470,484],["u",437,445,470,483],["u",376,381,446,457],["u",325,325,381,399],
    ["u",282,308,327,336],["d",306,308,351,390],["d",331,351,412,422],["u",189,251,412,419],
    ["d",209,251,268,298],["u",250,255,268,325],["u",208,239,255,278],["u",182,216,240,298],
    ["d",194,216,248,253],["d",210,248,271,277],["d",263,270,288,323],["u",236,261,288,296],
    ["d",261,261,301,317],["d",286,301,427,433],["u",350,350,427,453],["d",336,349,379,392],
    ["d",360,378,395,419],["u",375,383,395,431],["d",380,383,435,453],["u",291,307,435,440],
    ["d",307,307,363,388],["d",362,362,397,428],["u",297,305,397,397],["u",281,303,305,317],
    ["u",260,271,303,303],["d",261,271,301,318],["u",208,231,301,332],["f",226,231,231,259],
    ["d",217,230,240,256],["d",213,239,274,293],["u",205,220,274,274],["d",170,220,234,276],
    ["f",193,233,233,239],["d",225,234,235,249],["d",211,235,235,241],["u",207,211,236,239],
    ["u",200,200,211,219],["u",171,174,201,204],["d",171,174,174,204],["u",139,162,175,179],
    ["u",141,154,162,167],["d",153,154,164,179],["u",145,154,164,171],["d",152,153,196,207],
    ["d",182,195,214,223],["u",54,58,214,214],["u",40,46,58,90],["d",39,46,66,70],
    ["u",11,20,66,78],["u",-20,-10,21,30],["d",-20,-10,-8,8],["d",-20,-10,13,31],
    ["d",2,13,26,66],["u",0,9,26,54],["u",-8,-4,9,11],["d",-20,-10,49,90],
    ["d",20,49,65,74],["f",44,65,65,72],["u",31,53,65,81],["d",38,53,78,101],
    ["d",76,77,137,156],["u",53,61,137,152],["d",7,61,177,194],["u",158,160,177,207],
    ["d",135,160,178,178],["u",159,159,178,223],["d",148,159,203,209],["d",164,202,331,335],
    ["u",280,284,331,337],["f",258,283,284,300],["d",271,283,299,329],["d",287,298,311,327],
    ["f",298,310,310,335],["u",247,263,311,332],["d",250,263,279,290],["u",228,236,279,283],
    ["d",218,236,243,255],["u",211,228,243,248],["u",217,225,228,248],["u",171,189,226,264],
    ["d",187,189,206,220],["u",173,176,206,211],["u",164,167,177,184],["d",155,167,187,187],
    ["d",163,186,189,209],["u",173,183,189,204],["d",178,183,185,204],["d",180,184,257,257],
    ["u",139,203,257,257],["u",171,184,204,211],["u",146,149,184,191],["u",72,134,150,154],
    ["d",132,134,162,178],["d",148,161,200,216],["u",180,197,200,215],["f",194,196,196,197]
];

const zones = [
    [893, 72, 1013, 89],
    [790, 249, 1013, 263],
    [315, 318, 1013, 336]
];

const names = { u: "up", d: "down", f: "flat" };
const plot = document.getElementById("plot");

function add(parent, tag, attrs) {
    const el = document.createElementNS("http://www.w3.org/2000/svg", tag);
    for (const key in attrs) {
        el.setAttribute(key, attrs[key]);
    }
    parent.appendChild(el);
    return el;
}

function line(parent, cls, x1, y1, x2, y2) {
    return add(parent, "line", { class: cls, x1, y1, x2, y2 });
}

for (let i = 0; i < 22; i++) {
    const x = Math.floor(30 + i * 51.77) + 0.5;
    line(plot, "grid", x, 8, x, 522);
}
for (let i = 0; i < 17; i++) {
    line(plot, "grid", 6, i * 32 + 3.5, 1144, i * 32 + 3.5);
}

zones.forEach(([x1, y1, x2, y2]) => {
    add(plot, "rect", { class: "zone", x: x1, y: y1, width: x2 - x1, height: y2 - y1 });
});

line(plot, "last", 6, 196.5, 1146, 196.5);

candles.forEach(([dir, high, top, bottom, low], i) => {
    const x = Math.floor(4.7 + i * 8.628) + 0.5;
    const g = add(plot, "g", { class: names[dir] });
    line(g, "wick", x, high, x, low);
    add(g, "rect", {
        class: "body",
        x: x - 2.5,
        y: top + 0.5,
        width: 5,
        height: Math.max(bottom - top - 1, 0.1)
    });
});

line(plot, "cross", 0, 408.5, 1130, 408.5);
line(plot, "cross", 884.5, 0, 884.5, 528);
line(plot, "cursor", 884, 405.5, 900, 405.5);
line(plot, "cursor", 892.5, 398, 892.5, 413);
```
